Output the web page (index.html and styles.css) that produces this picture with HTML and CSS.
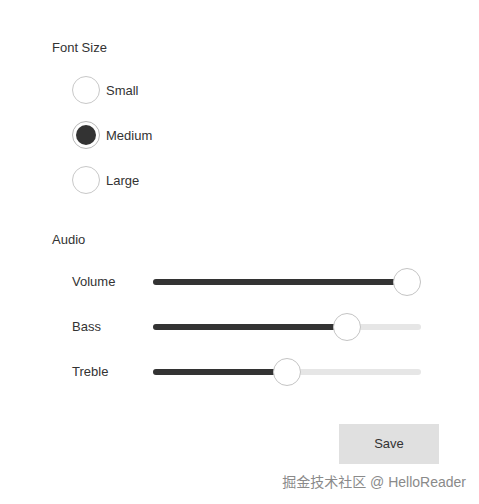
FILE: index.html
```html
<!DOCTYPE html>
<html>
<head>
<meta charset="utf-8">
<link rel="stylesheet" href="styles.css">
</head>
<body>
<div class="page">
  <section class="group">
    <div class="heading">Font Size</div>
    <div class="radios">
      <label class="radio-row"><span class="radio"></span><span class="label">Small</span></label>
      <label class="radio-row"><span class="radio checked"></span><span class="label">Medium</span></label>
      <label class="radio-row"><span class="radio"></span><span class="label">Large</span></label>
    </div>
  </section>
  <section class="group audio">
    <div class="heading">Audio</div>
    <div class="sliders">
      <div class="slider-row">
        <span class="slider-label">Volume</span>
        <div class="track"><div class="fill" style="width:254px"></div><div class="thumb" style="left:240px"></div></div>
      </div>
      <div class="slider-row">
        <span class="slider-label">Bass</span>
        <div class="track"><div class="fill" style="width:194px"></div><div class="thumb" style="left:180px"></div></div>
      </div>
      <div class="slider-row">
        <span class="slider-label">Treble</span>
        <div class="track"><div class="fill" style="width:134px"></div><div class="thumb" style="left:120px"></div></div>
      </div>
    </div>
  </section>
  <div class="actions">
    <button class="save">Save</button>
  </div>
</div>
<div class="watermark">掘金技术社区 @ HelloReader</div>
</body>
</html>
```
FILE: styles.css
```css
html, body {
  margin: 0;
  padding: 0;
  background: #fff;
}
body {
  width: 479px;
  height: 504px;
  position: relative;
  overflow: hidden;
  font-family: "Liberation Sans", Arial, "Noto Sans CJK SC", sans-serif;
  color: #333;
  font-size: 13px;
}
.page {
  padding: 40px 40px 0 52px;
  display: flex;
  flex-direction: column;
}
.heading {
  line-height: 16px;
  height: 16px;
}
.radios {
  margin-top: 11.5px;
  padding-left: 20px;
  display: flex;
  flex-direction: column;
}
.radio-row {
  height: 45px;
  display: flex;
  align-items: center;
  gap: 6px;
}
.radio {
  width: 28px;
  height: 28px;
  box-sizing: border-box;
  border: 1px solid #c8c8c8;
  border-radius: 50%;
  display: flex;
  align-items: center;
  justify-content: center;
  background: #fff;
}
.radio.checked {
  border-color: #b8b8b8;
}
.radio.checked::after {
  content: "";
  width: 20px;
  height: 20px;
  border-radius: 50%;
  background: #333;
}
.audio {
  margin-top: 29px;
}
.sliders {
  margin-top: 11.5px;
  padding-left: 20px;
  display: flex;
  flex-direction: column;
}
.slider-row {
  height: 45px;
  display: flex;
  align-items: center;
}
.slider-label {
  width: 81px;
}
.track {
  position: relative;
  width: 268px;
  height: 6px;
  border-radius: 3px;
  background: #e6e6e6;
}
.fill {
  height: 100%;
  border-radius: 3px;
  background: #333;
}
.thumb {
  position: absolute;
  top: -11px;
  width: 28px;
  height: 28px;
  box-sizing: border-box;
  border: 1px solid #c4c4c4;
  border-radius: 50%;
  background: #fff;
}
.actions {
  margin-top: 29.5px;
  display: flex;
  justify-content: flex-end;
}
.save {
  width: 100px;
  height: 40px;
  border: none;
  background: #e0e0e0;
  color: #333;
  font-family: inherit;
  font-size: 13px;
  padding: 0;
}
.watermark {
  position: absolute;
  right: 13px;
  top: 473px;
  font-size: 14px;
  line-height: 18px;
  color: #8a8a8a;
  font-family: "Liberation Sans", Arial, "Noto Sans CJK SC", sans-serif;
}
```
